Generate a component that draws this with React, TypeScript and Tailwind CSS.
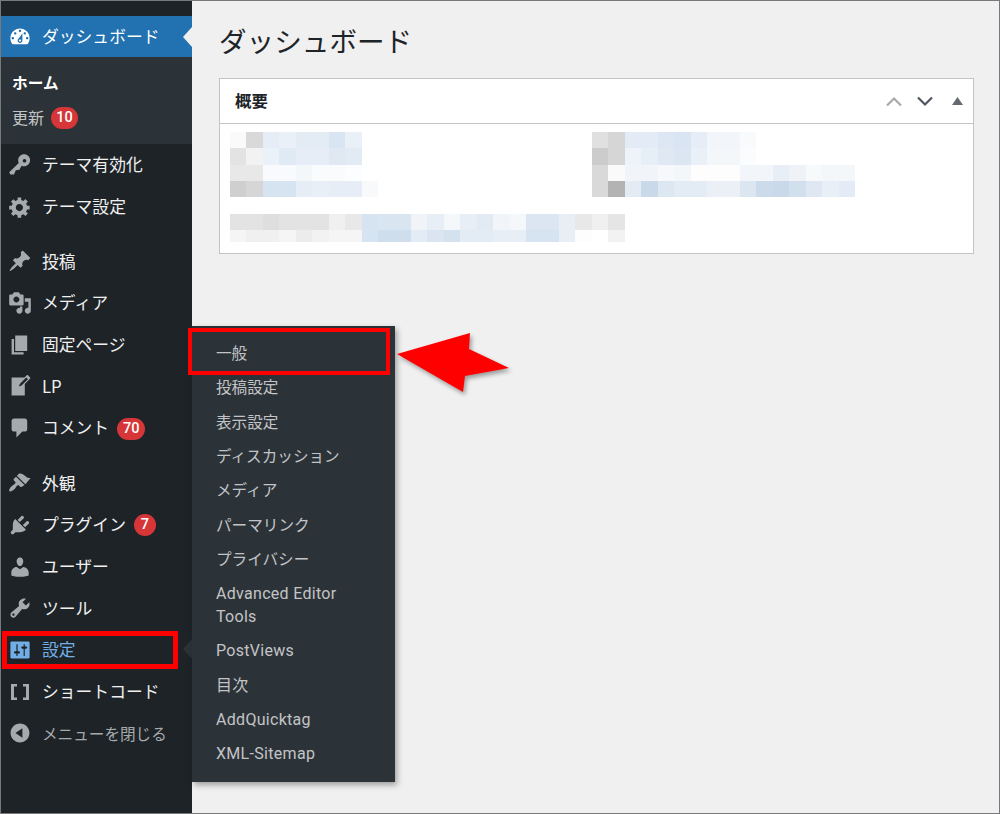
const FONT = "font-['Noto_Sans_CJK_JP','Noto_Sans',sans-serif]";

const P: Record<string, string> = {
  dashboard:
    "M3.76 16h12.48c1.1-1.37 1.76-3.11 1.76-5 0-4.42-3.58-8-8-8s-8 3.58-8 8c0 1.89.66 3.63 1.76 5zM10 4c.55 0 1 .45 1 1s-.45 1-1 1-1-.45-1-1 .45-1 1-1zM6 6c.55 0 1 .45 1 1s-.45 1-1 1-1-.45-1-1 .45-1 1-1zm8 0c.55 0 1 .45 1 1s-.45 1-1 1-1-.45-1-1 .45-1 1-1zm-5.37 5.55L12 7v6c0 1.1-.9 2-2 2s-2-.9-2-2c0-.57.24-1.08.63-1.45zM4 10c.55 0 1 .45 1 1s-.45 1-1 1-1-.45-1-1 .45-1 1-1zm12 0c.55 0 1 .45 1 1s-.45 1-1 1-1-.45-1-1 .45-1 1-1zm-5 3c0-.55-.45-1-1-1s-1 .45-1 1 .45 1 1 1 1-.45 1-1z",
  key: "M16.95 2.58c1.96 1.95 1.96 5.12 0 7.07-1.51 1.51-3.75 1.84-5.59 1.01l-1.87 3.31-2.99.31L5 18H2l-1-2 7.95-7.69c-.92-1.87-.62-4.18.93-5.73 1.95-1.95 5.12-1.95 7.07 0zm-2.12 4.94c.58-.59.58-1.54 0-2.12-.59-.58-1.54-.58-2.12 0-.59.58-.59 1.53 0 2.12.58.59 1.53.59 2.12 0z",
  gear: "M18 12h-2.18c-.17.7-.44 1.35-.81 1.93l1.54 1.54-2.1 2.1-1.54-1.54c-.58.36-1.23.63-1.91.79V19H8v-2.18c-.68-.16-1.33-.43-1.91-.79l-1.54 1.54-2.12-2.12 1.54-1.54c-.36-.58-.63-1.23-.79-1.91H1V9.03h2.17c.16-.7.44-1.35.8-1.94L2.43 5.55l2.1-2.1 1.54 1.54c.58-.37 1.24-.64 1.93-.81V2h3v2.18c.68.16 1.33.43 1.91.79l1.54-1.54 2.12 2.12-1.54 1.54c.36.59.64 1.24.8 1.94H18V12zm-8.5 1.5c1.66 0 3-1.34 3-3s-1.34-3-3-3-3 1.34-3 3 1.34 3 3 3z",
  pin: "M10.44 3.02l1.82-1.82 6.36 6.35-1.83 1.82c-1.05-.68-2.48-.57-3.41.36l-.75.75c-.92.93-1.04 2.35-.35 3.41l-1.83 1.82-2.41-2.41-2.8 2.79c-.42.42-3.38 2.71-3.8 2.29s1.86-3.39 2.28-3.81l2.79-2.79L4.1 9.36l1.83-1.82c1.05.69 2.48.57 3.4-.36l.75-.75c.93-.92 1.05-2.35.36-3.41z",
  media:
    "M13 11V4c0-.55-.45-1-1-1h-1.67L9 1H5L3.67 3H2c-.55 0-1 .45-1 1v7c0 .55.45 1 1 1h10c.55 0 1-.45 1-1zM7 4.5c1.38 0 2.5 1.12 2.5 2.5S8.38 9.5 7 9.5 4.5 8.38 4.5 7 5.62 4.5 7 4.5zM14 6h5v10.5c0 1.38-1.12 2.5-2.5 2.5S14 17.88 14 16.5s1.12-2.5 2.5-2.5c.17 0 .34.02.5.05V9h-3V6zm-4 8.05V13h2v3.5c0 1.38-1.12 2.5-2.5 2.5S7 17.88 7 16.5 8.12 14 9.5 14c.17 0 .34.02.5.05z",
  page: "M6 15V2h10v13H6zm-1 1h8v2H3V5h2v11z",
  write:
    "M16.89 1.2l1.41 1.41c.39.39.39 1.02 0 1.41L14 8.33V18H3V3h10.67l1.8-1.8c.4-.39 1.03-.4 1.42 0zm-5.66 8.48l5.37-5.36-1.42-1.42-5.36 5.37-.71 2.12z",
  comment: "M5 2h9c1.1 0 2 .9 2 2v7c0 1.1-.9 2-2 2h-2l-5 5v-5H5c-1.1 0-2-.9-2-2V4c0-1.1.9-2 2-2z",
  brush:
    "M14.48 11.06L7.41 3.99l1.5-1.5c.5-.56 2.3-.47 3.51.32 1.21.8 1.43 1.28 2.91 2.1 1.18.64 2.45 1.26 3.55.85zm-.71.71L6.7 4.7 4.93 6.47c-.39.39-.39 1.02 0 1.41l1.06 1.06c.39.39.39 1.03 0 1.42-.6.6-1.43 1.11-2.21 1.69-.35.26-.7.53-1.01.84-1.43 1.43-2.25 3.25-1.55 3.95s2.52-.12 3.95-1.55c.31-.31.58-.66.84-1.01.58-.78 1.09-1.61 1.69-2.21.39-.39 1.03-.39 1.42 0l1.06 1.06c.39.39 1.02.39 1.41 0z",
  plug: "M13.11 4.36L9.87 7.6 8 5.73l3.24-3.24c.35-.34 1.05-.2 1.56.32.52.51.66 1.21.31 1.55zm-8 1.77l.91-1.12 9.01 9.01-1.19.84c-.71.71-2.63 1.16-3.82 1.16H6.14L4.9 17.26c-.59.59-1.54.59-2.12 0-.59-.58-.59-1.53 0-2.12l1.24-1.24v-3.88c0-1.13.4-3.19 1.09-3.89zm7.26 3.97l3.24-3.24c.34-.35 1.04-.21 1.55.31.52.51.66 1.21.31 1.55l-3.24 3.25z",
  user: "M10 9.25c-2.27 0-2.73-3.44-2.73-3.44C7 4.02 7.82 2 9.97 2c2.16 0 2.98 2.02 2.71 3.81 0 0-.41 3.44-2.68 3.44zm0 2.57L12.72 10c2.39 0 4.52 2.33 4.52 4.53v2.49s-3.65 1.13-7.24 1.13c-3.65 0-7.24-1.13-7.24-1.13v-2.49c0-2.25 1.94-4.48 4.47-4.48z",
  tool: "M16.68 9.77c-1.34 1.34-3.3 1.67-4.95.99l-5.41 6.52c-.99.99-2.59.99-3.58 0s-.99-2.59 0-3.57l6.52-5.42c-.68-1.65-.35-3.61.99-4.95 1.28-1.28 3.12-1.62 4.72-1.06l-2.89 2.89 2.82 2.82 2.86-2.87c.53 1.58.18 3.39-1.08 4.65zM3.81 16.21c.4.39 1.04.39 1.43 0 .4-.4.4-1.04 0-1.43-.39-.4-1.03-.4-1.43 0-.39.39-.39 1.03 0 1.43z",
  settings:
    "M18 16V4c0-.55-.45-1-1-1H3c-.55 0-1 .45-1 1v12c0 .55.45 1 1 1h14c.55 0 1-.45 1-1zM8 11h1c.55 0 1 .45 1 1s-.45 1-1 1H8v1.5c0 .28-.22.5-.5.5s-.5-.22-.5-.5V13H6c-.55 0-1-.45-1-1s.45-1 1-1h1V5.5c0-.28.22-.5.5-.5s.5.22.5.5V11zm5-2h-1c-.55 0-1-.45-1-1s.45-1 1-1h1V5.5c0-.28.22-.5.5-.5s.5.22.5.5V7h1c.55 0 1 .45 1 1s-.45 1-1 1h-1v5.5c0 .28-.22.5-.5.5s-.5-.22-.5-.5V9z",
  brackets: "M2.5 3.3h5v2.2H5v9h2.5v2.2h-5zM17.5 3.3h-5v2.2H15v9h-2.5v2.2h5z",
  collapse:
    "M10 2.16c4.33 0 7.84 3.51 7.84 7.84s-3.51 7.84-7.84 7.84S2.16 14.33 2.16 10 5.71 2.16 10 2.16zm2 11.72V6.12L6.18 9.97z",
};

function Icon({ name, className }: { name: string; className: string }) {
  return (
    <svg viewBox="0 0 20 20" className={`h-6 w-6 shrink-0 fill-current ${className}`}>
      <path d={P[name]} fillRule="evenodd" />
    </svg>
  );
}

function Badge({ n, w }: { n: string; w: string }) {
  return (
    <span
      className={`flex h-[22px] ${w} items-center justify-center rounded-full bg-[#d63638] font-['Roboto',sans-serif] text-[14.5px] font-medium text-white`}
    >
      {n}
    </span>
  );
}

function Item({ icon, label, badge, badgeW }: { icon: string; label: string; badge?: string; badgeW?: string }) {
  return (
    <div className="flex h-[41.7px] items-center pl-[7px] text-[16.8px] text-[#f0f0f1]">
      <Icon name={icon} className="text-[#a7aaad]" />
      <span className="ml-[10px]">{label}</span>
      {badge && <Badge n={badge} w={badgeW ?? "ml-2 w-7"} />}
    </div>
  );
}

function Mosaic({ rows, cell = 16.45, heights }: { rows: string[][]; cell?: number; heights?: number[] }) {
  const hs = rows.map((_, i) => heights?.[i] ?? cell);
  const w = Math.max(...rows.map((r) => r.length)) * cell;
  const h = hs.reduce((a, b) => a + b, 0);
  let y = 0;
  return (
    <svg width={w} height={h} viewBox={`0 0 ${w} ${h}`} className="block" shapeRendering="crispEdges">
      {rows.map((r, i) => {
        const top = y;
        y += hs[i];
        return r.map((c, j) => <rect key={`${i}-${j}`} x={j * cell} y={top} width={cell} height={hs[i]} fill={c} />);
      })}
    </svg>
  );
}

const A = [
  ["#fafafa", "#d9d9d9", "#e6edf6", "#e9f0f8", "#e3ebf5", "#e3ebf5", "#d9e5f2", "#e9f0f8"],
  ["#e3e3e3", "#f2f2f2", "#ebf1f9", "#e0eaf4", "#e6edf6", "#e6edf6", "#e0e8f3", "#e2eaf4"],
  ["#e8e8e8", "#e8e8e8", "#f8fafd", "#f8fafd", "#f4f7fa", "#fafbfd", "#fafbfd", "#fcfdfe"],
  ["#cfcfcf", "#d6d6d6", "#d6e3f0", "#d6e3f0", "#e6edf6", "#e8eff7", "#e6edf6", "#e6edf6", "#f8f9fb"],
];
const B = [
  ["#e0e0e0", "#d6d6d6", "#e3ebf6", "#e3ebf6", "#dde7f3", "#d9e5f2", "#e6edf6", "#f2f5fa", "#f2f5fa", "#f8fafc"],
  ["#cccccc", "#d6d6d6", "#eef3f9", "#e6eef6", "#dfe8f3", "#dce6f2", "#eaf0f7", "#f4f7fa", "#f4f7fa", "#fbfcfd"],
  ["#d9d9d9", "#fafafa", "#f1f5f9", "#f1f5f9", "#f6f8fb", "#f4f7fa", "#fdfdfe", "#fdfdfe", "#fdfdfe", "#f2f5f9", "#f2f5f9", "#e8eef6", "#eff3f8", "#f7f9fb", "#f4f7fa", "#f4f7fa"],
  ["#d9d9d9", "#b3b3b3", "#e3ebf5", "#c9d9ea", "#dde7f2", "#e3ebf5", "#e3ebf5", "#ebf0f7", "#ebf0f7", "#dce6f1", "#cbdbec", "#c9d9ea", "#d2dfed", "#dfe7f2", "#e8eff7", "#e3ebf6"],
];
const C = [
  ["#e3e3e3", "#e3e3e3", "#dedede", "#e3e3e3", "#e3e3e3", "#e3e3e3", "#f0f0f0", "#e8e8e8", "#d6e3f0", "#d9e5f1", "#d9e5f1", "#f0f4f9", "#e8eef6", "#f5f8fb", "#e8eef6", "#e2eaf4", "#f1f5f9", "#f5f8fb", "#dbe6f2", "#dbe6f2", "#e8eef6", "#e8e8e8", "#f0f0f0", "#e5e5e5"],
  ["#f5f5f5", "#f0f0f0", "#f0f0f0", "#f5f5f5", "#ececec", "#f2f2f2", "#f5f5f5", "#f5f5f5", "#d6e3f0", "#cfdeed", "#cfdeed", "#e3ebf5", "#dae5f1", "#d4e1ee", "#e3ebf5", "#e3ebf5", "#e8eef6", "#e8eef6", "#d6e3f0", "#d6e3f0", "#e8eef6", "#fdfdfd", "#ffffff", "#f2f2f2"],
];

const SUB: string[] = ["投稿設定", "表示設定", "ディスカッション", "メディア", "パーマリンク", "プライバシー"];
const SUB2: string[] = ["PostViews", "目次", "AddQuicktag", "XML-Sitemap"];

function SubRow({ label }: { label: string }) {
  return <div className="flex h-[34.3px] items-center pl-6">{label}</div>;
}

export default function App() {
  return (
    <div className={`relative h-[814px] w-[1000px] overflow-hidden border border-[#77797b] bg-[#f0f0f1] ${FONT}`}>
      <div className="flex h-full">
        {/* Sidebar */}
        <aside className="w-[191px] shrink-0 bg-[#1d2327] pt-[15px]">
          <div className="relative flex h-[41px] items-center bg-[#2271b1] pl-[7px] text-[16.8px] text-white">
            <Icon name="dashboard" className="text-white" />
            <span className="ml-[10px]">ダッシュボード</span>
            <span className="absolute right-0 top-[11px] h-0 w-0 border-y-[10px] border-r-[9px] border-y-transparent border-r-[#f0f0f1]" />
          </div>
          <div className="h-[87px] bg-[#2c3338] pl-[11px]">
            <div className="flex h-[51px] items-center pt-[1px] text-[15.7px] font-bold text-white">ホーム</div>
            <div className="flex h-[19px] items-center text-[16px] text-[#c3c4c7]">
              <span className="mt-[-2px]">更新</span>
              <Badge n="10" w="ml-[7px] w-[27px]" />
            </div>
          </div>
          <Item icon="key" label="テーマ有効化" />
          <Item icon="gear" label="テーマ設定" />
          <div className="h-[13px]" />
          <Item icon="pin" label="投稿" />
          <Item icon="media" label="メディア" />
          <Item icon="page" label="固定ページ" />
          <Item icon="write" label="LP" />
          <Item icon="comment" label="コメント" badge="70" badgeW="ml-2 mt-[2px] w-7" />
          <div className="h-[13.6px]" />
          <Item icon="brush" label="外観" />
          <Item icon="plug" label="プラグイン" badge="7" badgeW="ml-2 w-[22px]" />
          <Item icon="user" label="ユーザー" />
          <Item icon="tool" label="ツール" />
          <div className="relative flex h-[41.7px] items-center pl-[7px] text-[16.8px] text-[#72aee6]">
            <Icon name="settings" className="text-[#72aee6]" />
            <span className="ml-[10px]">設定</span>
            <span className="absolute right-0 top-[10px] h-0 w-0 border-y-[10px] border-r-[9px] border-y-transparent border-r-[#2c3338]" />
          </div>
          <Item icon="brackets" label="ショートコード" />
          <div className="flex h-[41.7px] items-center pl-[7px] text-[15.6px] text-[#a7aaad]">
            <Icon name="collapse" className="text-[#a7aaad]" />
            <span className="ml-[10px]">メニューを閉じる</span>
          </div>
        </aside>

        {/* Main */}
        <main className="flex-1 pl-[27px] pr-[25px] pt-[19px]">
          <h1 className="text-[27.6px] font-normal leading-[40px] text-[#1d2327]">ダッシュボード</h1>
          <section className="mt-[18px] h-[176px] border-[1.5px] border-[#c3c4c7] bg-white">
            <div className="flex h-[45px] items-center justify-between border-b-[1.5px] border-[#c3c4c7] pl-[15px] pr-[10px]">
              <h2 className="mt-[-2px] text-[16.4px] font-bold text-[#1d2327]">概要</h2>
              <div className="flex items-center">
                <svg width="18" height="12" viewBox="0 0 18 12" className="fill-none stroke-[#a7aaad] stroke-[2.2]">
                  <path d="M2 10.5 9 3.5l7 7" />
                </svg>
                <svg width="18" height="12" viewBox="0 0 18 12" className="ml-[13px] mt-[2px] fill-none stroke-[#50575e] stroke-[2.2]">
                  <path d="M2 1.5l7 7 7-7" />
                </svg>
                <svg width="11" height="8" viewBox="0 0 11 8" className="ml-[18px] fill-[#646970]">
                  <path d="M5.5 0 11 8H0z" />
                </svg>
              </div>
            </div>
            <div className="pl-[10px] pt-[7.5px]">
              <div className="flex">
                <div className="w-[362px]">
                  <Mosaic rows={A} />
                </div>
                <Mosaic rows={B} />
              </div>
              <div className="mt-[16.5px]">
                <Mosaic rows={C} heights={[16.5, 11.5]} />
              </div>
            </div>
          </section>
        </main>
      </div>

      {/* Flyout submenu */}
      <div className="absolute left-[191px] top-[325px] h-[456px] w-[203px] bg-[#2c3338] pt-[9px] text-[15.6px] leading-[22px] text-[#c3c4c7] shadow-[2px_3px_6px_rgba(0,0,0,0.35)]">
        <SubRow label="一般" />
        {SUB.map((s) => (
          <SubRow key={s} label={s} />
        ))}
        <div className="pb-[6px] pl-6 pr-[40px] pt-[8px] font-['Roboto','Noto_Sans_CJK_JP',sans-serif] text-[16px] leading-[22.5px] tracking-[0.3px]">
          Advanced Editor Tools
        </div>
        {SUB2.map((s) => (
          <div key={s} className="flex h-[34.3px] items-center pl-6 font-['Roboto','Noto_Sans_CJK_JP',sans-serif] text-[16px] tracking-[0.3px]">
            {s}
          </div>
        ))}
      </div>

      {/* Annotations */}
      <div className="absolute left-[187px] top-[327px] h-[47px] w-[202px] border-[4.5px] border-[#ff0000]" />
      <div className="absolute left-px top-[630px] h-[38px] w-[176px] border-[5px] border-[#ff0000]" />
      <svg
        width="120"
        height="68"
        viewBox="0 0 120 68"
        className="absolute left-[394px] top-[330px] drop-shadow-[2px_3px_2px_rgba(0,0,0,0.35)]"
      >
        <path d="M2 23 75 2 74 18 114 37 70 45 68 61z" fill="#ff0000" />
      </svg>
    </div>
  );
}
